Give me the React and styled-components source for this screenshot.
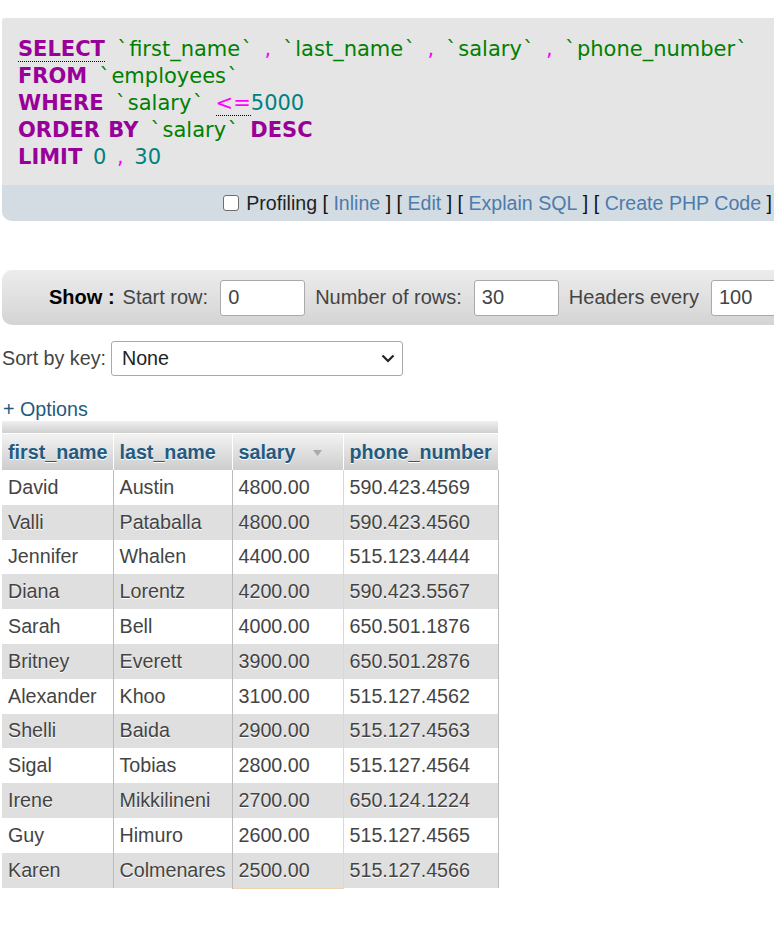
import React from "react";
import styled, { createGlobalStyle } from "styled-components";

const Global = createGlobalStyle`
  html, body { margin: 0; padding: 0; background: #fff; }
  body { font-family: "Liberation Sans", Arial, sans-serif; font-size: 19.7px; color: #444; }
`;

const Page = styled.div`
  width: 100%;
  min-height: 934px;
  overflow: hidden;
  padding: 18px 0 0 2px;
  box-sizing: border-box;
`;

const SqlBox = styled.div`
  background: #e5e5e5;
  border-top-left-radius: 3px;
  border-bottom-left-radius: 10px;
  overflow: hidden;
`;

const Code = styled.div`
  font-family: "DejaVu Sans", Verdana, sans-serif;
  font-size: 21px;
  line-height: 27px;
  word-spacing: 4px;
  white-space: pre;
  padding: 18px 0 14px 16px;
`;

const Kw = styled.span`
  color: #990099;
  font-weight: bold;
  word-spacing: 1px;
  border-bottom: ${(p) => (p.$dotted ? "1px dotted #000" : "none")};
`;
const Id = styled.span`
  color: #008000;
`;
const Tick = styled.span`
  padding: 0 1.5px;
`;
const Pu = styled.span`
  color: #ff00ff;
  border-bottom: ${(p) => (p.$dotted ? "1px dotted #000" : "none")};
`;
const Num = styled.span`
  color: #008080;
`;

const ActionBar = styled.div`
  background: #d3dce3;
  height: 36px;
  display: flex;
  align-items: center;
  justify-content: flex-end;
  padding-right: 2px;
  font-size: 19.6px;
  color: #222;
  white-space: pre;
`;

const Check = styled.input`
  appearance: none;
  width: 16px;
  height: 16px;
  margin: 0 7px 0 0;
  border: 1px solid #6f6f6f;
  border-radius: 3px;
  background: #fff;
  box-sizing: border-box;
`;

const Bracket = styled.span`
  color: #111;
`;

const Link = styled.a`
  color: ${(p) => (p.$dark ? "#235a81" : "#4d7bab")};
  text-decoration: none;
`;

const ShowBar = styled.div`
  margin-top: 49px;
  width: 900px;
  height: 55px;
  display: flex;
  align-items: center;
  padding-left: 47px;
  box-sizing: border-box;
  font-size: 20px;
  background: linear-gradient(#ececec, #d4d4d4);
  border-radius: 10px 0 0 10px;
  white-space: nowrap;
`;

const ShowLabel = styled.span`
  font-weight: bold;
  color: #000;
  margin-right: 8px;
`;

const FieldLabel = styled.span`
  color: #444;
  margin-right: 12px;
`;

const NumInput = styled.div`
  width: 85px;
  height: 36px;
  box-sizing: border-box;
  border: 1px solid #aaa;
  border-radius: 3px;
  background: #fff;
  padding: 0 7px;
  display: flex;
  align-items: center;
  color: #444;
  margin-right: 10px;
  flex: none;
`;

const SortRow = styled.div`
  margin-top: 16px;
  display: flex;
  align-items: center;
  color: #444;
`;

const SelectBox = styled.div`
  margin-left: 5px;
  width: 292px;
  height: 35px;
  box-sizing: border-box;
  border: 1px solid #aaa;
  border-radius: 3px;
  background: #fff;
  display: flex;
  align-items: center;
  justify-content: space-between;
  padding: 0 7px 0 10px;
  color: #222;
`;

const Options = styled.div`
  margin-top: 22px;
  line-height: 23px;
  padding-left: 1px;
`;

const TableWrap = styled.div`
  width: 496px;
`;

const Band = styled.div`
  height: 12px;
  background: linear-gradient(#f0f0f0, #cfcfcf);
  border-bottom: 1px solid #fff;
`;

const Table = styled.table`
  border-collapse: collapse;
  table-layout: fixed;
  width: 496px;
`;

const Th = styled.th`
  height: 36px;
  padding: 0 6px;
  text-align: left;
  font-weight: bold;
  color: #235a81;
  text-shadow: 0 1px 0 #fff;
  background: linear-gradient(#f2f2f2, #cdcdcd);
  border-right: 1px solid #fff;
  white-space: nowrap;
  &:last-child { border-right: none; }
`;

const Td = styled.td`
  height: 34.8px;
  padding: 0 6px;
  color: #444;
  text-shadow: 0 1px 0 #fff;
  white-space: nowrap;
  border-right: 1px solid ${(p) => (p.$sorted ? "#f3d2ae" : "#bbb")};
  border-left: ${(p) => (p.$sorted ? "1px solid #f3d2ae" : "none")};
`;

const Tr = styled.tr`
  background: ${(p) => (p.$odd ? "#dfdfdf" : "#fff")};
  &:last-child td:nth-child(3) { border-bottom: 1px solid #f3d2ae; }
`;

const SortArrow = styled.svg`
  margin-left: 18px;
  vertical-align: middle;
`;

const rows = [
  ["David", "Austin", "4800.00", "590.423.4569"],
  ["Valli", "Pataballa", "4800.00", "590.423.4560"],
  ["Jennifer", "Whalen", "4400.00", "515.123.4444"],
  ["Diana", "Lorentz", "4200.00", "590.423.5567"],
  ["Sarah", "Bell", "4000.00", "650.501.1876"],
  ["Britney", "Everett", "3900.00", "650.501.2876"],
  ["Alexander", "Khoo", "3100.00", "515.127.4562"],
  ["Shelli", "Baida", "2900.00", "515.127.4563"],
  ["Sigal", "Tobias", "2800.00", "515.127.4564"],
  ["Irene", "Mikkilineni", "2700.00", "650.124.1224"],
  ["Guy", "Himuro", "2600.00", "515.127.4565"],
  ["Karen", "Colmenares", "2500.00", "515.127.4566"],
];

const Ident = ({ name }) => (
  <Id>
    <Tick>`</Tick>
    {name}
    <Tick>`</Tick>
  </Id>
);

export default function App() {
  return (
    <Page>
      <Global />
      <SqlBox>
        <Code>
          <Kw $dotted>SELECT</Kw> <Ident name="first_name" /> <Pu>,</Pu> <Ident name="last_name" /> <Pu>,</Pu>{" "}
          <Ident name="salary" /> <Pu>,</Pu> <Ident name="phone_number" />
          {"\n"}
          <Kw>FROM</Kw> <Ident name="employees" />
          {"\n"}
          <Kw>WHERE</Kw> <Ident name="salary" /> <Pu $dotted>&lt;=</Pu><Num>5000</Num>
          {"\n"}
          <Kw>ORDER BY</Kw> <Ident name="salary" /> <Kw>DESC</Kw>
          {"\n"}
          <Kw>LIMIT</Kw> <Num>0</Num> <Pu>,</Pu> <Num>30</Num>
        </Code>
        <ActionBar>
          <Check type="checkbox" readOnly />
          <span>Profiling </span>
          <Bracket>[ </Bracket><Link>Inline</Link><Bracket> ] [ </Bracket>
          <Link>Edit</Link><Bracket> ] [ </Bracket>
          <Link>Explain SQL</Link><Bracket> ] [ </Bracket>
          <Link>Create PHP Code</Link><Bracket> ]</Bracket>
        </ActionBar>
      </SqlBox>

      <ShowBar>
        <ShowLabel>Show :</ShowLabel>
        <FieldLabel>Start row:</FieldLabel>
        <NumInput>0</NumInput>
        <FieldLabel>Number of rows:</FieldLabel>
        <NumInput>30</NumInput>
        <FieldLabel>Headers every</FieldLabel>
        <NumInput>100</NumInput>
      </ShowBar>

      <SortRow>
        <span>Sort by key:</span>
        <SelectBox>
          <span>None</span>
          <svg width="14" height="9" viewBox="0 0 14 9">
            <path d="M1.5 1.5 L7 7 L12.5 1.5" fill="none" stroke="#222" strokeWidth="2.2" />
          </svg>
        </SelectBox>
      </SortRow>

      <Options>
        <Link $dark>+ Options</Link>
      </Options>

      <TableWrap>
        <Band />
        <Table>
          <colgroup>
            <col style={{ width: 111 }} />
            <col style={{ width: 119 }} />
            <col style={{ width: 111 }} />
            <col style={{ width: 155 }} />
          </colgroup>
          <thead>
            <tr>
              <Th>first_name</Th>
              <Th>last_name</Th>
              <Th>
                salary
                <SortArrow width="9" height="6" viewBox="0 0 9 6">
                  <path d="M0 0 H9 L4.5 6 Z" fill="#aaa" />
                </SortArrow>
              </Th>
              <Th>phone_number</Th>
            </tr>
          </thead>
          <tbody>
            {rows.map((r, i) => (
              <Tr key={i} $odd={i % 2 === 1}>
                <Td>{r[0]}</Td>
                <Td>{r[1]}</Td>
                <Td $sorted>{r[2]}</Td>
                <Td>{r[3]}</Td>
              </Tr>
            ))}
          </tbody>
        </Table>
      </TableWrap>
    </Page>
  );
}
